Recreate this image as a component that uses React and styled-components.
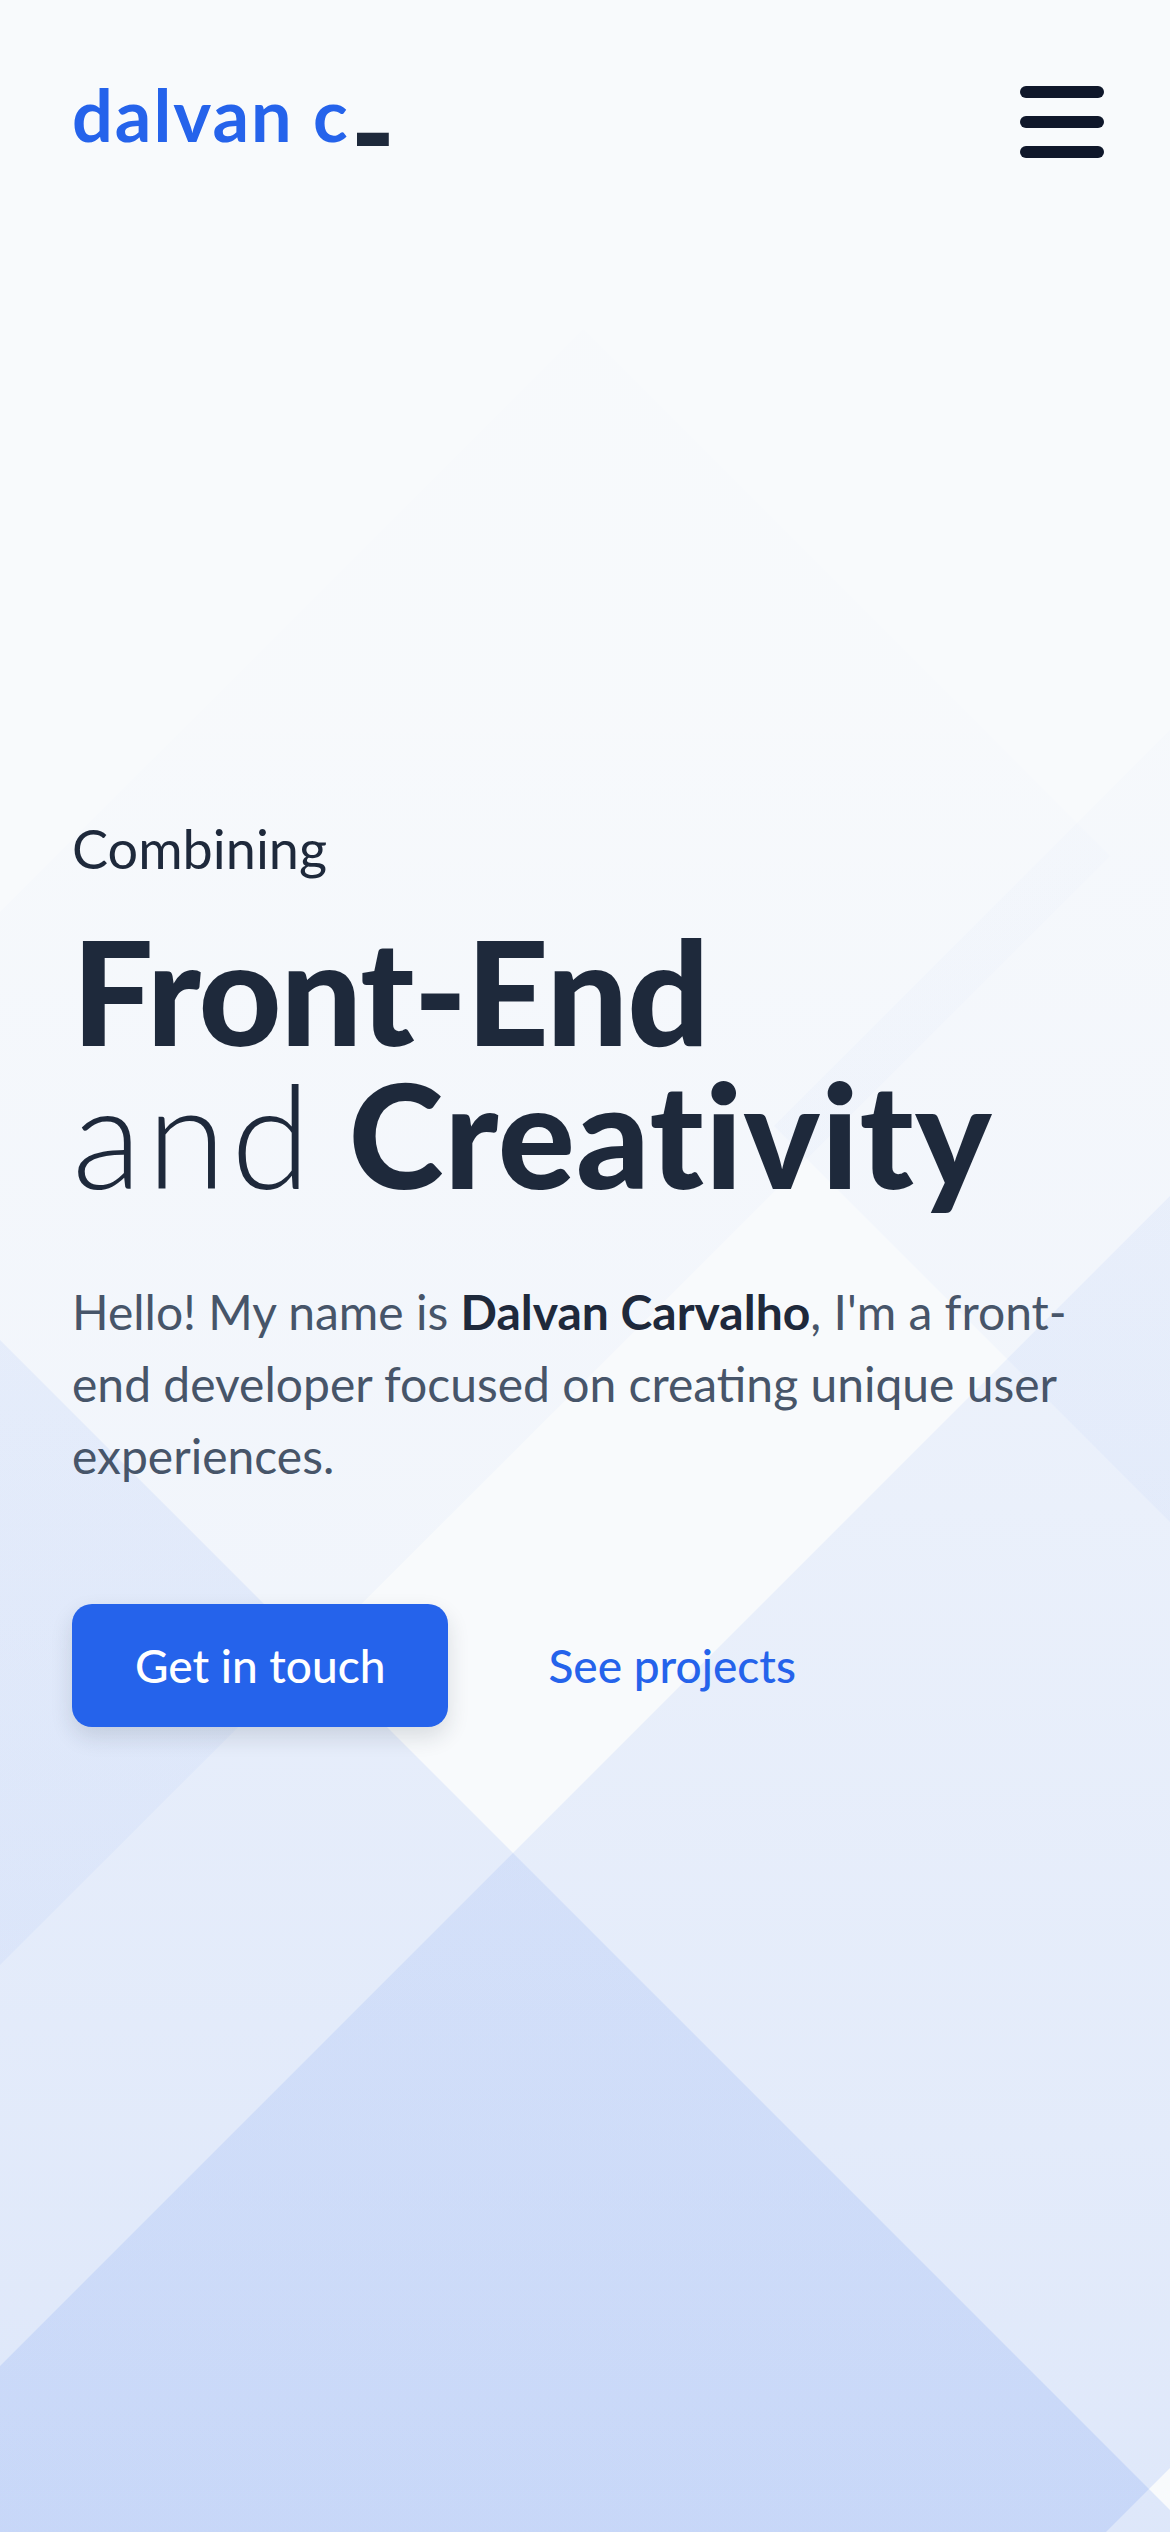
import React from "react"
import styled, { createGlobalStyle } from "styled-components"

const GlobalStyle = createGlobalStyle`
    * {
        box-sizing: border-box;
    }
    html,
    body {
        margin: 0;
        padding: 0;
        background-color: #f8fafc;
    }
    body {
        font-family: "Lato", "Inter", "Liberation Sans", sans-serif;
        color: #1e293b;
    }
`

const Page = styled.div`
    position: relative;
    display: flex;
    flex-direction: column;
    width: 100%;
    min-height: 100vh;
    overflow: hidden;
    background-color: #f8fafc;
`

// geometric backdrop
const Backdrop = styled.svg`
    position: absolute;
    top: 0;
    left: 0;
    width: 100%;
    height: 100%;
    z-index: 0;
    pointer-events: none;
`

const Header = styled.header`
    position: relative;
    z-index: 1;
    display: flex;
    justify-content: space-between;
    align-items: flex-start;
    padding: 78px 66px 0 72px;
`

const Logo = styled.a`
    font-size: 72px;
    line-height: 80px;
    font-weight: 700;
    color: #2563eb;
    text-decoration: none;
    letter-spacing: 2px;
    margin-top: -4px;
`

// thick terminal cursor after the logo
const Cursor = styled.span`
    display: inline-block;
    margin-left: 4px;
    color: #1e293b;
    font-weight: 900;
    transform-origin: 0 79px;
    transform: translateY(-6px) scale(1.12, 2.1);
`

const MenuButton = styled.button`
    display: flex;
    flex-direction: column;
    gap: 18px;
    margin-top: 8px;
    padding: 0;
    border: none;
    background: none;
    cursor: pointer;
`

const MenuBar = styled.span`
    display: block;
    width: 84px;
    height: 12px;
    border-radius: 6px;
    background-color: #0f172a;
`

const Hero = styled.main`
    position: relative;
    z-index: 1;
    display: flex;
    flex-direction: column;
    padding: 658px 72px 0 72px;
`

const Eyebrow = styled.p`
    margin: 0;
    font-size: 54px;
    line-height: 65px;
    font-weight: 400;
    color: #1e293b;
`

const Title = styled.h1`
    margin: 38px 0 0 0;
    font-size: 144px;
    line-height: 143px;
    font-weight: 900;
    letter-spacing: -1px;
    color: #1e293b;
`

const TitleWord = styled.span`
    font-weight: ${(p) => (p.$light ? 300 : 900)};
    letter-spacing: ${(p) => (p.$light ? "5px" : "1px")};
`

const Intro = styled.p`
    margin: 71px 0 0 0;
    font-size: 48px;
    line-height: 72px;
    font-weight: 400;
    color: #475569;

    strong {
        font-weight: 700;
        color: #1e293b;
    }
`

const Actions = styled.div`
    display: flex;
    align-items: center;
    gap: 100px;
    margin-top: 112px;
`

const PrimaryButton = styled.a`
    display: inline-flex;
    align-items: center;
    justify-content: center;
    height: 123px;
    padding: 0 63px;
    border-radius: 20px;
    background-color: #2563eb;
    color: #ffffff;
    font-size: 46px;
    font-weight: 500;
    text-decoration: none;
    box-shadow: 0 10px 22px rgba(30, 41, 59, 0.14);
`

const TextButton = styled.a`
    font-size: 46px;
    font-weight: 500;
    color: #2563eb;
    text-decoration: none;
`

const Shapes = () => (
    <Backdrop viewBox="0 0 1170 2532" preserveAspectRatio="none">
        <defs>
            <linearGradient id="gradB" gradientUnits="userSpaceOnUse" x1="0" y1="1340" x2="0" y2="2532">
                <stop offset="0" stopColor="#2563eb" stopOpacity="0.065" />
                <stop offset="1" stopColor="#2563eb" stopOpacity="0.125" />
            </linearGradient>
            <linearGradient id="gradA" gradientUnits="userSpaceOnUse" x1="0" y1="1196" x2="0" y2="2532">
                <stop offset="0" stopColor="#2563eb" stopOpacity="0.05" />
                <stop offset="1" stopColor="#2563eb" stopOpacity="0.12" />
            </linearGradient>
            <linearGradient id="gradC" gradientUnits="userSpaceOnUse" x1="0" y1="700" x2="0" y2="1965">
                <stop offset="0" stopColor="#2563eb" stopOpacity="0.005" />
                <stop offset="1" stopColor="#2563eb" stopOpacity="0.045" />
            </linearGradient>
            <linearGradient id="gradD" gradientUnits="userSpaceOnUse" x1="0" y1="730" x2="0" y2="1522">
                <stop offset="0" stopColor="#2563eb" stopOpacity="0.01" />
                <stop offset="1" stopColor="#2563eb" stopOpacity="0.035" />
            </linearGradient>
        </defs>
        <polygon points="583,329 1110,856 0,1965 0,912" fill="url(#gradC)" />
        <polygon points="774,1126 1170,1522 1170,730" fill="url(#gradD)" />
        <polygon points="0,1340 1192,2532 0,2532" fill="url(#gradB)" />
        <polygon points="0,2366 1170,1196 1170,2468 1106,2532 0,2532" fill="url(#gradA)" />
    </Backdrop>
)

export default function App() {
    return (
        <>
            <GlobalStyle />
            <Page>
                <Shapes />
                <Header>
                    <Logo href="#">
                        dalvan c<Cursor>_</Cursor>
                    </Logo>
                    <MenuButton aria-label="menu">
                        <MenuBar />
                        <MenuBar />
                        <MenuBar />
                    </MenuButton>
                </Header>

                <Hero>
                    <Eyebrow>Combining</Eyebrow>
                    <Title>
                        Front-End
                        <br />
                        <TitleWord $light>and</TitleWord> <TitleWord>Creativity</TitleWord>
                    </Title>
                    <Intro>
                        Hello! My name is <strong>Dalvan Carvalho</strong>, I'm a front-end developer
                        focused on creating unique user experiences.
                    </Intro>
                    <Actions>
                        <PrimaryButton href="#">Get in touch</PrimaryButton>
                        <TextButton href="#">See projects</TextButton>
                    </Actions>
                </Hero>
            </Page>
        </>
    )
}
